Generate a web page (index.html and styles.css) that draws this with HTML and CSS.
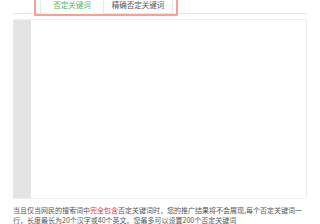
FILE: index.html
```html
<!DOCTYPE html>
<html lang="zh-CN">
<head>
    <meta charset="UTF-8">
    <title>否定关键词</title>
    <link rel="stylesheet" href="styles.css">
</head>
<body>

<div class="kw-panel">
    <div class="tab-bar">
        <div class="tab active">否定关键词</div>
        <div class="tab">精确否定关键词</div>
        <div class="tab-highlight"></div>
    </div>

    <div class="editor">
        <div class="gutter"></div>
        <div class="editor-body"></div>
    </div>

    <p class="tip">当且仅当网民的搜索词中<span class="hl">完全包含</span>否定关键词时，您的推广结果将不会展现,每个否定关键词一行，长度最长为20个汉字或40个英文。您最多可以设置200个否定关键词</p>
</div>

</body>
</html>
```

FILE: styles.css
```css
body {
    margin: 0;
    background: #fff;
    font-family: "Noto Sans CJK SC", "Noto Sans", sans-serif;
}

.kw-panel {
    padding: 0 13px;
}

.tab-bar {
    position: relative;
    display: flex;
    height: 13px;
    padding-left: 27px;
    border-bottom: 1px solid #e8e8e8;
}

.tab {
    box-sizing: border-box;
    height: 14px;
    width: 70px;
    font-size: 7.5px;
    line-height: 10px;
    text-align: center;
    color: #555;
    background: #fff;
    border: 1px solid #e8e8e8;
    border-top: none;
}

.tab.active {
    width: 63px;
    color: #3dbb6a;
    border-right: none;
    border-bottom-color: #fff;
}

.tab-highlight {
    position: absolute;
    left: 21px;
    top: -4px;
    width: 144px;
    height: 20px;
    box-sizing: border-box;
    border: 2px solid #f7a195;
    border-radius: 1px;
}

.editor {
    display: flex;
    height: 178px;
    margin-top: 5px;
    border: 1px solid #ececec;
    border-left: none;
    border-radius: 2px;
}

.gutter {
    width: 18px;
    background: #e4e4e4;
}

.editor-body {
    flex-grow: 1;
    background: #fff;
}

.tip {
    margin: 6px 0 0;
    font-size: 7px;
    line-height: 10px;
    color: #555;
}

.tip .hl {
    color: #f0323a;
}
```
